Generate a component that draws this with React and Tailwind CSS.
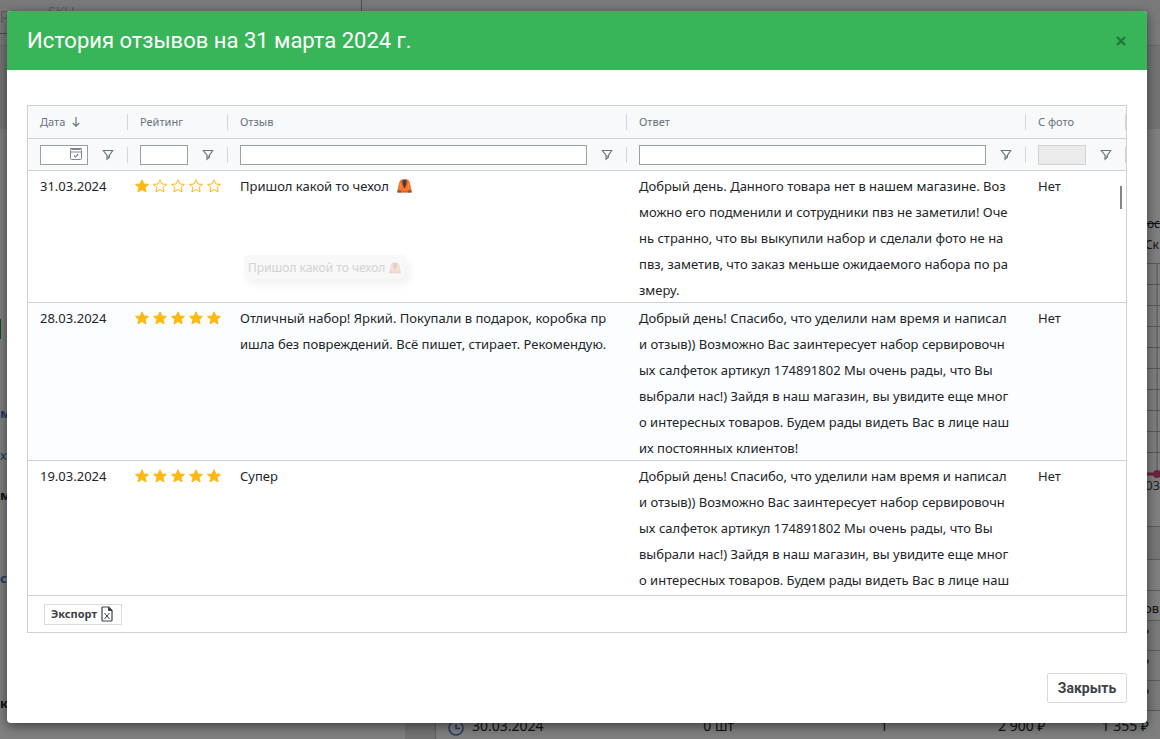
const reviews = [
  {
    id: 1,
    date: '31.03.2024',
    rating: 1,
    review: ['Пришол какой то чехол'],
    vest: true,
    answer: [
      'Добрый день. Данного товара нет в нашем магазине. Воз',
      'можно его подменили и сотрудники пвз не заметили! Оче',
      'нь странно, что вы выкупили набор и сделали фото не на',
      'пвз, заметив, что заказ меньше ожидаемого набора по ра',
      'змеру.',
    ],
    photo: 'Нет',
  },
  {
    id: 2,
    date: '28.03.2024',
    rating: 5,
    review: [
      'Отличный набор! Яркий. Покупали в подарок, коробка пр',
      'ишла без повреждений. Всё пишет, стирает. Рекомендую.',
    ],
    answer: [
      'Добрый день! Спасибо, что уделили нам время и написал',
      'и отзыв)) Возможно Вас заинтересует набор сервировочн',
      'ых салфеток артикул 174891802 Мы очень рады, что Вы',
      'выбрали нас!) Зайдя в наш магазин, вы увидите еще мног',
      'о интересных товаров. Будем рады видеть Вас в лице наш',
      'их постоянных клиентов!',
    ],
    photo: 'Нет',
  },
  {
    id: 3,
    date: '19.03.2024',
    rating: 5,
    review: ['Супер'],
    answer: [
      'Добрый день! Спасибо, что уделили нам время и написал',
      'и отзыв)) Возможно Вас заинтересует набор сервировочн',
      'ых салфеток артикул 174891802 Мы очень рады, что Вы',
      'выбрали нас!) Зайдя в наш магазин, вы увидите еще мног',
      'о интересных товаров. Будем рады видеть Вас в лице наш',
    ],
    photo: 'Нет',
  },
];

const columns = [
  { key: 'date', title: 'Дата', sorted: true },
  { key: 'rating', title: 'Рейтинг' },
  { key: 'review', title: 'Отзыв' },
  { key: 'answer', title: 'Ответ' },
  { key: 'photo', title: 'С фото' },
];

function Star({ filled }) {
  return (
    <svg viewBox="0 0 14 14" className="h-[14px] w-[14px]">
      <path
        d="M7 .8l1.900 4.200 4.600.4-3.500 3 1.100 4.500L7 10.500l-4.100 2.400L4 8.400.5 5.400 5.100 5z"
        fill={filled ? '#fdb913' : 'none'}
        stroke="#fdb913"
        strokeWidth="1"
        strokeLinejoin="round"
      />
    </svg>
  );
}

function Vest({ className }) {
  return (
    <svg viewBox="0 0 15 14" className={className}>
      <path d="M5 .5h5c1.500.3 2.500 1.500 3 3.500l1.500 7v2.500H.5V11L2 4C2.500 2 3.500.8 5 .5z" fill="#f8732a" />
      <path d="M.5 11.500l3.500-.3v2.300H.5zM14.500 11.500l-3.500-.3v2.300h3.500z" fill="#6b5563" />
      <path d="M5 .5h5l.3 3.500L7.500 10 4.700 4z" fill="#a05232" />
      <path d="M6 1.300h3L9 5.500 7.500 9 6 5.500z" fill="#463a3c" />
      <path d="M3 12.800h9" stroke="#c9552a" strokeWidth="1" />
      <path d="M3.200 4l.5 6M11.800 4l-.5 6" stroke="#fb8f3c" strokeWidth="1" />
    </svg>
  );
}

function FilterIcon() {
  return (
    <svg viewBox="0 0 12 12" className="h-3 w-3" fill="none" stroke="#68727d">
      <path d="M1.300 1.500h9.400L7.500 6.200v2L5 10.300V6.200z" strokeWidth="1.100" />
      <path d="M5.200 6.500h2v1.600l-2 1.700z" fill="#8c949c" stroke="none" />
    </svg>
  );
}

function SortIcon() {
  return (
    <svg viewBox="0 0 10 12" className="h-3 w-[10px]" fill="none" stroke="#68727d" strokeWidth="1.200">
      <path d="M5 1v9M1.800 7L5 10.200 8.200 7" />
    </svg>
  );
}

function CalendarIcon() {
  return (
    <svg viewBox="0 0 14 14" className="h-[14px] w-[14px]" fill="none" stroke="#7d868e">
      <rect x="1.500" y="2.500" width="11" height="10" rx="1" />
      <path d="M1 1.500h12M2 5h10" />
      <path d="M5 8.500l1.500 1.500L9.200 7" strokeWidth="1.200" />
    </svg>
  );
}

function ExcelIcon() {
  return (
    <svg viewBox="0 0 12 16" className="h-4 w-3" fill="none" stroke="#3c4146">
      <path d="M2 1h5.500L11 4.500V14a1 1 0 01-1 1H2a1 1 0 01-1-1V2a1 1 0 011-1z" strokeWidth="1.200" />
      <path d="M7.500 1v3.500H11z" fill="#3c4146" />
      <path d="M3.500 7l5 6M8.500 7l-5 6" />
    </svg>
  );
}

function ColumnFilter({ column }) {
  return (
    <div className="flex h-[31px] items-center pl-3">
      <div className="relative min-w-0 flex-1">
        <input
          type="text"
          aria-label={`${column.title}: фильтр`}
          disabled={column.key === 'photo'}
          className="block h-5 w-full border border-[#95a1a6] bg-white px-1 text-xs outline-none disabled:border-[#d0d3d5] disabled:bg-[#ebebeb]"
        />
        {column.key === 'date' && (
          <button type="button" aria-label="Выбрать дату" className="absolute top-[2px] right-[5px]">
            <CalendarIcon />
          </button>
        )}
      </div>
      <button type="button" aria-label={`${column.title}: условия`} className="mr-[13px] ml-[14px]">
        <FilterIcon />
      </button>
      <span className="h-4 w-px bg-[#d3d7da]" />
    </div>
  );
}

function ReviewsTable() {
  return (
    <table className="w-full table-fixed border-collapse text-left">
      <colgroup>
        <col className="w-[100px]" />
        <col className="w-[100px]" />
        <col />
        <col />
        <col className="w-[100px]" />
      </colgroup>
      <thead className="bg-[#f7f9fb] text-[11px] text-[#68727d]">
        <tr className="border-b border-[#cdd1d4]">
          {columns.map((column) => (
            <th key={column.key} className="p-0 font-normal">
              <div className="flex h-8 items-center pl-3">
                <span className="pt-px">{column.title}</span>
                {column.sorted && (
                  <span className="ml-[6px]">
                    <SortIcon />
                  </span>
                )}
                <span className="ml-auto h-4 w-px bg-[#d3d7da]" />
              </div>
            </th>
          ))}
        </tr>
        <tr className="border-b border-[#cdd1d4]">
          {columns.map((column) => (
            <td key={column.key} className="p-0">
              <ColumnFilter column={column} />
            </td>
          ))}
        </tr>
      </thead>
      <tbody className="text-[13px] leading-[26px] text-[#212529]">
        {reviews.map((row) => (
          <tr key={row.id} className="border-b border-[#cdd1d4] align-top last:border-b-0 even:bg-[#fcfdfe]">
            <td className="p-0 pt-[2px] pl-3">{row.date}</td>
            <td className="p-0 pt-[2px] pl-[7px]">
              <div className="flex h-[26px] items-center gap-1" role="img" aria-label={`${row.rating} из 5`}>
                {[1, 2, 3, 4, 5].map((n) => (
                  <Star key={n} filled={n <= row.rating} />
                ))}
              </div>
            </td>
            <td className="p-0 pt-[2px] pl-3 whitespace-nowrap">
              {row.review.map((line) => (
                <div key={line} className="flex items-center gap-2">
                  {line}
                  {row.vest && <Vest className="h-[14px] w-[15px]" />}
                </div>
              ))}
            </td>
            <td className="p-0 pt-[2px] pl-3 whitespace-nowrap">
              <div className="-mb-px">
                {row.answer.map((line) => (
                  <div key={line}>{line}</div>
                ))}
              </div>
            </td>
            <td className="p-0 pt-[2px] pl-3">{row.photo}</td>
          </tr>
        ))}
      </tbody>
    </table>
  );
}

function ReviewsModal() {
  return (
    <div
      role="dialog"
      aria-labelledby="modal-title"
      className="overflow-hidden rounded-sm bg-white shadow-[0_3px_12px_rgba(0,0,0,0.5)]"
    >
      <div className="flex h-[59px] items-center justify-between bg-[#39b559] px-5 font-[Roboto,sans-serif]">
        <h2 id="modal-title" className="text-[22px] text-white">
          История отзывов на 31 марта 2024 г.
        </h2>
        <button type="button" aria-label="Закрыть окно" className="text-[#20793a]">
          <svg viewBox="0 0 12 12" className="h-3 w-3" stroke="currentColor" strokeWidth="2.400">
            <path d="M2 2l8 8M10 2l-8 8" />
          </svg>
        </button>
      </div>

      <div className="px-5 pt-[35px] pb-5">
        <div className="border border-[#cdd1d4]">
          <div className="relative h-[489px] overflow-hidden">
            <ReviewsTable />
            <div className="absolute top-20 right-1 h-[23px] w-[2px] bg-[#858585]" />
            {/* drag preview of the review cell */}
            <div className="absolute top-[149px] left-[216px] flex h-6 items-center gap-1 rounded-sm bg-[#f8f8f8] px-1 pt-px text-xs text-[#d2d2d2] shadow-[4px_5px_9px_rgba(0,0,0,0.06)]">
              Пришол какой то чехол
              <span className="opacity-20">
                <Vest className="h-3 w-3" />
              </span>
            </div>
          </div>
          <div className="flex h-[37px] items-center border-t border-[#cdd1d4] px-4">
            <button
              type="button"
              className="flex h-[21px] items-center gap-1 border border-[#d9dcde] pr-2 pl-[6px] text-[11px] font-bold text-[#3c4146]"
            >
              <span className="pt-px">Экспорт</span>
              <ExcelIcon />
            </button>
          </div>
        </div>

        <div className="mt-10 flex justify-end">
          <button
            type="button"
            className="h-[30px] w-20 rounded-xs border border-[#d9d9d9] font-[Roboto,sans-serif] text-sm font-bold text-[#3f4347]"
          >
            Закрыть
          </button>
        </div>
      </div>
    </div>
  );
}

function Dashboard() {
  return (
    <div className="flex h-screen flex-col overflow-hidden bg-white text-sm text-[#212529]" aria-hidden="true">
      <div className="h-[46px] shrink-0 border-b border-[#d5d5d5] bg-[#f4f4f4]">
        <div className="flex h-[34px] w-[362px] border-r border-b border-[#9b9b9b] text-[#bbb]">
          <span className="w-12 leading-7">ри</span>
          <span className="leading-6">SKU</span>
        </div>
      </div>
      <div className="h-[83px] shrink-0 bg-[#e8e8e8]" />

      <div className="flex min-h-0 flex-1">
        <div className="w-[405px] shrink-0 pt-[190px] text-[13px] font-bold text-[#3f75cf]">
          <div className="h-5 w-px bg-[#1d9b3d]" />
          <div className="pt-[64px] leading-5">м</div>
          <div className="pt-[22px] font-normal leading-5">х</div>
          <div className="pt-5 leading-5 text-[#212529]">м</div>
          <div className="pt-[63px] leading-5">с</div>
          <div className="pt-[105px] leading-5 text-[#212529]">к</div>
        </div>
        <div className="w-[31px] shrink-0 border-r border-[#bbb] bg-[#e4e4e4]" />

        <div className="min-w-0 flex-1">
          <div className="pt-[84px] text-right text-xs">
            <div className="leading-[22px] line-through">Стоимос</div>
            <div className="pr-px leading-5">Ск</div>
          </div>
          <svg className="mt-2 block h-[263px] w-full">
            {[0, 21, 42, 63, 84, 105, 126, 147, 168, 189, 210].map((y) => (
              <line key={y} x1="0" x2="100%" y1={y + 0.5} y2={y + 0.5} stroke="#b5b5b5" />
            ))}
            <line x1="99.600%" x2="99.600%" y1="0" y2="210" stroke="#aaa" />
            <line x1="0" x2="100%" y1="211" y2="211" stroke="#d9437a" strokeWidth="3" />
            <circle cx="99.600%" cy="211" r="4" fill="#d9437a" />
            <text x="100%" y="227" textAnchor="end" fontSize="13" fill="#444">
              03
            </text>
          </svg>
          <div className="h-[33px] border-t border-[#bbb] bg-[#f0f0f0]" />
          <div className="h-[31px] border-t border-[#bbb]" />
          <div className="h-[30px] border-t border-[#bbb] pr-px text-right text-[13px] leading-[34px]">Заказов</div>
          {[1, 2, 3].map((n) => (
            <div key={n} className="h-[30px] border-t border-[#bbb] bg-[#f4f4f4] pr-[11px] text-right text-[13px] leading-6">
              ₽
            </div>
          ))}
          <div className="flex h-[30px] items-center border-t border-[#bbb] pr-[11px] pl-3">
            <svg viewBox="0 0 16 16" className="mt-1 h-4 w-4 shrink-0" fill="none" stroke="#3f75cf" strokeWidth="1.500">
              <circle cx="8" cy="8" r="7" />
              <path d="M8 4v4.500h4" />
            </svg>
            <span className="ml-2 w-[170px] shrink-0">30.03.2024</span>
            <span className="w-[92px] shrink-0 text-right">0 шт</span>
            <span className="w-[154px] shrink-0 text-right">1</span>
            <span className="ml-auto flex gap-14">
              <span>2 900 ₽</span>
              <span>1 355 ₽</span>
            </span>
          </div>
        </div>
      </div>
    </div>
  );
}

export default function App() {
  return (
    <div className="relative font-['Noto_Sans','Open_Sans',sans-serif]">
      <Dashboard />
      <div className="absolute inset-0 bg-black/50 pt-[11px] pr-[13px] pl-[7px]">
        <ReviewsModal />
      </div>
    </div>
  );
}
